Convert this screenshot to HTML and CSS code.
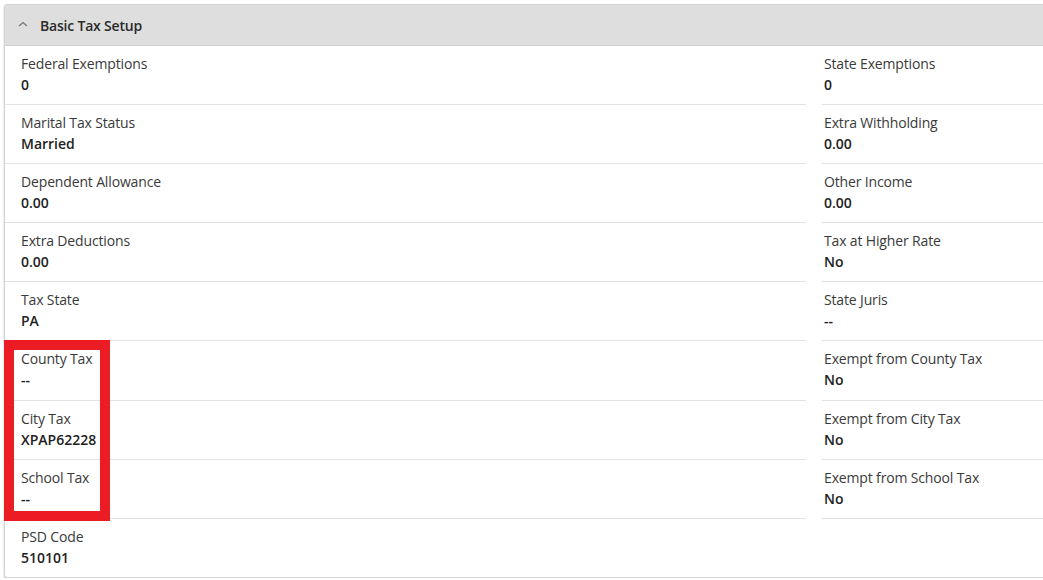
FILE: index.html
```html
<!DOCTYPE html>
<html>
<head>
<meta charset="utf-8">
<link rel="stylesheet" href="styles.css">
</head>
<body>
<div class="page">
  <section class="card">
    <header class="card-header">
      <svg class="chev" width="10" height="6" viewBox="0 0 10 6"><polyline points="1,5 5,1.5 9,5" fill="none" stroke="#777" stroke-width="1.3"/></svg>
      <span class="title">Basic Tax Setup</span>
    </header>
    <div class="grid">
      <div class="col col-left">
        <div class="item"><div class="label">Federal Exemptions</div><div class="value">0</div></div>
        <div class="item"><div class="label">Marital Tax Status</div><div class="value">Married</div></div>
        <div class="item"><div class="label">Dependent Allowance</div><div class="value">0.00</div></div>
        <div class="item"><div class="label">Extra Deductions</div><div class="value">0.00</div></div>
        <div class="item"><div class="label">Tax State</div><div class="value">PA</div></div>
        <div class="item"><div class="label">County Tax</div><div class="value">--</div></div>
        <div class="item"><div class="label">City Tax</div><div class="value">XPAP62228</div></div>
        <div class="item"><div class="label">School Tax</div><div class="value">--</div></div>
        <div class="item last"><div class="label">PSD Code</div><div class="value">510101</div></div>
      </div>
      <div class="col col-right">
        <div class="item"><div class="label">State Exemptions</div><div class="value">0</div></div>
        <div class="item"><div class="label">Extra Withholding</div><div class="value">0.00</div></div>
        <div class="item"><div class="label">Other Income</div><div class="value">0.00</div></div>
        <div class="item"><div class="label">Tax at Higher Rate</div><div class="value">No</div></div>
        <div class="item"><div class="label">State Juris</div><div class="value">--</div></div>
        <div class="item"><div class="label">Exempt from County Tax</div><div class="value">No</div></div>
        <div class="item"><div class="label">Exempt from City Tax</div><div class="value">No</div></div>
        <div class="item"><div class="label">Exempt from School Tax</div><div class="value">No</div></div>
      </div>
    </div>
  </section>
  <div class="highlight"></div>
</div>
</body>
</html>
```

FILE: styles.css
```css
html, body {
  margin: 0;
  padding: 0;
  background: #ffffff;
  overflow: hidden;
}
body {
  font-family: "Open Sans", "Liberation Sans", sans-serif;
  font-size: 14px;
  color: #333333;
}
.page {
  position: relative;
  padding: 4px 0 0 4px;
}
.card {
  width: 1060px;
  border: 1px solid #d4d4d4;
  border-radius: 3px;
  box-shadow: 0 1px 2px rgba(0, 0, 0, 0.25);
  background: #ffffff;
  overflow: hidden;
}
.card-header {
  height: 40px;
  background: #dedede;
  border-bottom: 1px solid #cfcfcf;
  display: flex;
  align-items: center;
  padding-left: 13px;
}
.chev {
  display: block;
  margin-right: 12px;
  margin-top: -2px;
}
.title {
  font-weight: 600;
  color: #2b2b2b;
  font-size: 14px;
  letter-spacing: -0.2px;
}
.grid {
  display: grid;
  grid-template-columns: 801px 1fr;
  column-gap: 16px;
}
.item {
  padding: 7px 0 9px;
  border-bottom: 1px solid #e2e2e2;
  line-height: 21px;
  height: 42.1px;
}
.col-left .item {
  padding-left: 16px;
}
.col-left .item.last {
  border-bottom: none;
}
.col-right .item {
  padding-left: 2px;
}
.label {
  color: #3a3a3a;
  letter-spacing: -0.15px;
}
.value {
  font-weight: 600;
  color: #222222;
}
.highlight {
  position: absolute;
  left: 4px;
  top: 340px;
  width: 86px;
  height: 161px;
  border: 10px solid #ec1c24;
}
```
